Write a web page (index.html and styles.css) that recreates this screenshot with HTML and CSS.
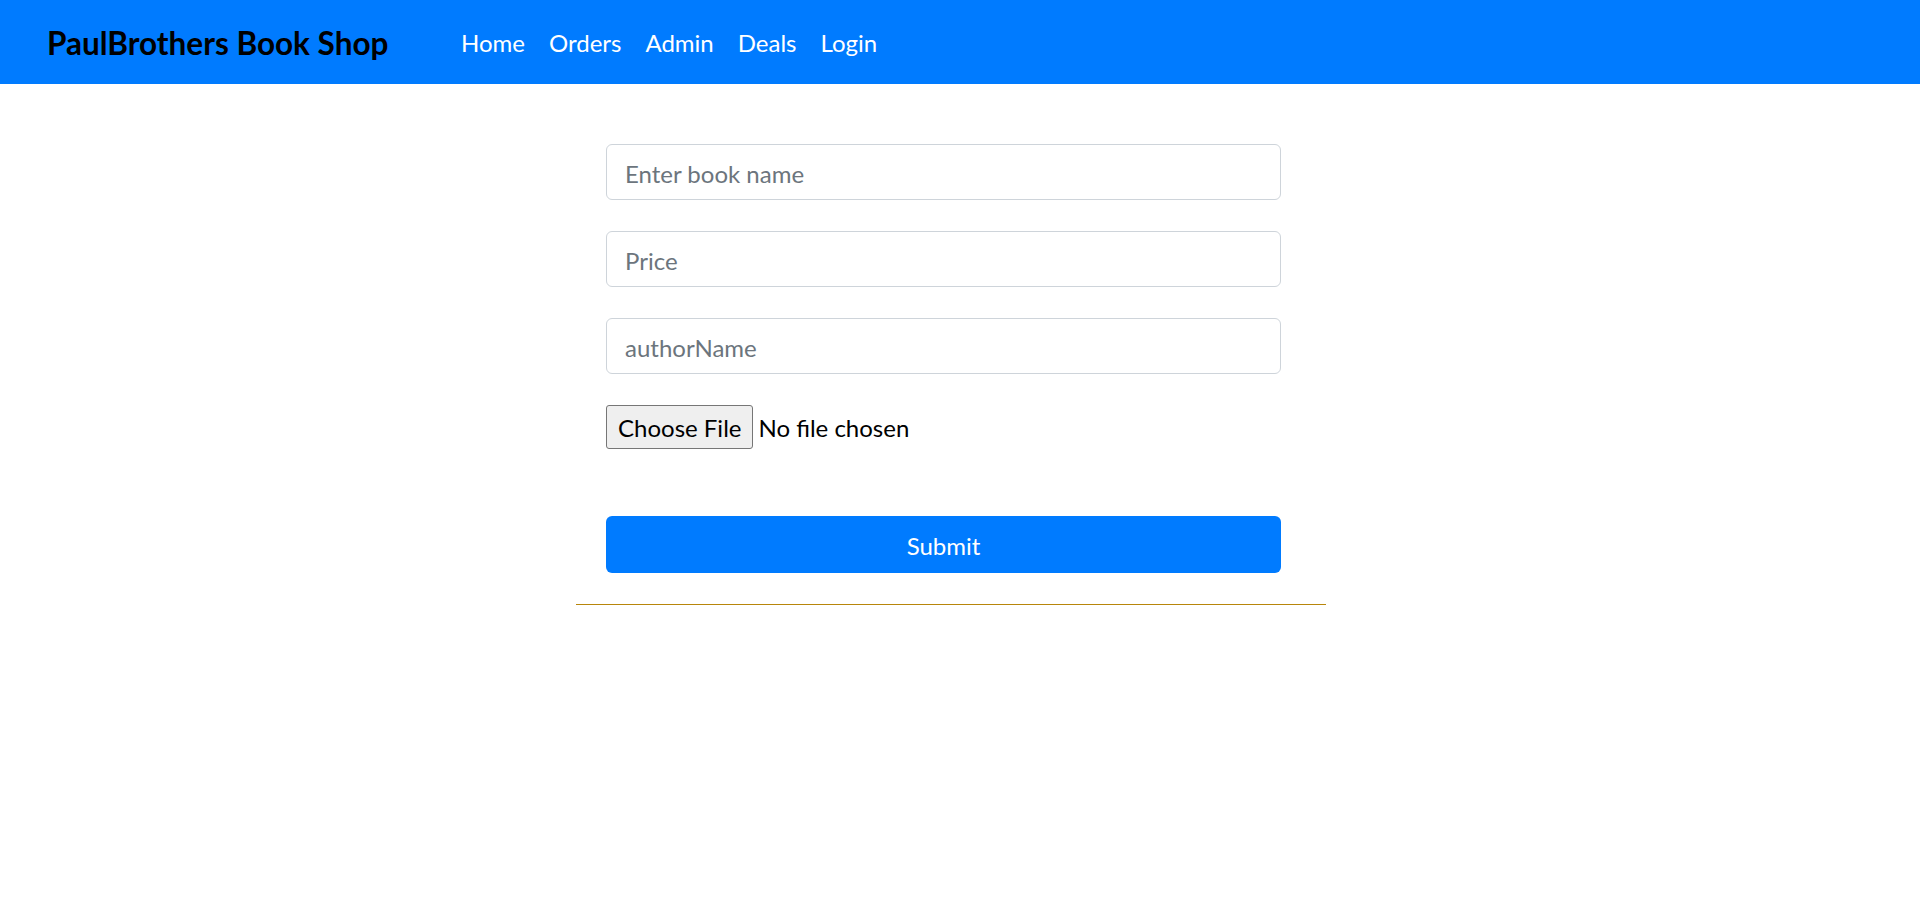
FILE: index.html
```html
<!DOCTYPE html>
<html lang="en">
<head>
<meta charset="utf-8">
<title>PaulBrothers Book Shop</title>
<link rel="stylesheet" href="styles.css">
</head>
<body>
<nav class="navbar">
  <a class="brand" href="#">PaulBrothers Book Shop</a>
  <ul class="nav-links">
    <li><a href="#">Home</a></li>
    <li><a href="#">Orders</a></li>
    <li><a href="#">Admin</a></li>
    <li><a href="#">Deals</a></li>
    <li><a href="#">Login</a></li>
  </ul>
</nav>
<main class="page">
  <form class="book-form">
    <input class="field" type="text" placeholder="Enter book name">
    <input class="field" type="text" placeholder="Price">
    <input class="field" type="text" placeholder="authorName">
    <input class="file" type="file">
    <button class="submit" type="button">Submit</button>
  </form>
  <hr class="divider">
</main>
</body>
</html>
```

FILE: styles.css
```css
* { box-sizing: border-box; }
html, body { margin: 0; padding: 0; background: #fff; }
body {
  font-family: "Segoe UI", Lato, "Liberation Sans", sans-serif;
  color: #212529;
}
.navbar {
  height: 84px;
  background: #007bff;
  display: flex;
  align-items: center;
  padding: 2px 0 0 47px;
}
.brand {
  font-size: 31.5px;
  font-weight: 700;
  color: #000;
  text-decoration: none;
  line-height: 45px;
  width: 402px;
}
.nav-links {
  list-style: none;
  margin: 0;
  padding: 0;
  display: flex;
}
.nav-links a {
  display: block;
  padding: 0 12px;
  font-size: 24px;
  line-height: 36px;
  color: #fff;
  text-decoration: none;
}
.page {
  padding-top: 60px;
}
.book-form {
  width: 675px;
  margin-left: 606px;
  display: flex;
  flex-direction: column;
}
.field {
  height: 56px;
  margin: 0 0 31px 0;
  border: 1px solid #ced4da;
  border-radius: 6px;
  padding: 2px 18px 0 18px;
  font-family: inherit;
  font-size: 24px;
  color: #495057;
  background: #fff;
  outline: none;
}
.field::placeholder { color: #6c757d; }
.file {
  font-family: inherit;
  font-size: 24px;
  color: #000;
  height: 44px;
  margin: 0 0 67px 0;
  padding: 0;
}
.file::file-selector-button {
  font-family: inherit;
  font-size: 24px;
  height: 44px;
  padding: 0 11px;
  margin-right: 5px;
  border: 1px solid #767676;
  border-radius: 3px;
  background: #efefef;
  color: #000;
}
.submit {
  height: 57px;
  border: none;
  border-radius: 6px;
  background: #007bff;
  color: #fff;
  font-family: inherit;
  font-size: 24px;
  padding-top: 2px;
}
.divider {
  width: 750px;
  margin: 31px 0 0 576px;
  border: none;
  border-top: 1px solid #b8860b;
  height: 0;
}
```
